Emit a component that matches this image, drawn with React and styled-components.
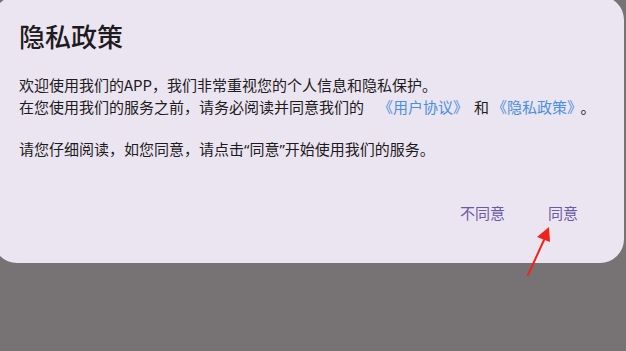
import React from "react";
import styled, { createGlobalStyle } from "styled-components";

const Global = createGlobalStyle`
  html, body { margin: 0; padding: 0; }
  body {
    background: #777274;
    font-family: "Noto Sans CJK SC", "Noto Sans", sans-serif;
    overflow: hidden;
  }
`;

const Screen = styled.div`
  position: relative;
  width: 626px;
  height: 351px;
  overflow: hidden;
  background: #777274;
`;

const Dialog = styled.div`
  box-sizing: border-box;
  margin: -4px 0 0 -7px;
  width: 631px;
  height: 267px;
  border-radius: 24px;
  background: #ebe5f1;
  padding: 24px 34px 0 26px;
  display: flex;
  flex-direction: column;
`;

const Title = styled.h1`
  margin: 0;
  font-size: 26px;
  line-height: 32px;
  font-weight: 500;
  color: #1d1b20;
`;

const Paragraph = styled.p`
  margin: ${(p) => p.$gap}px 0 0;
  font-size: 15px;
  line-height: 22px;
  color: #1d1b20;
  white-space: nowrap;
`;

const Link = styled.span`
  color: #4a8fe0;
  margin-left: ${(p) => p.$ml || 0}px;
  margin-right: ${(p) => p.$mr || 0}px;
`;

const Quote = styled.span`
  font-family: "Noto Sans", sans-serif;
`;

const Actions = styled.div`
  margin-top: 32px;
  display: flex;
  justify-content: flex-end;
  gap: 19px;
`;

const TextButton = styled.button`
  height: 40px;
  padding: 0 12px;
  border: none;
  background: transparent;
  font-family: inherit;
  font-size: 15px;
  color: #6b5aa6;
  cursor: pointer;
`;

const Arrow = styled.svg`
  position: absolute;
  left: 520px;
  top: 220px;
  width: 40px;
  height: 60px;
`;

export default function App() {
  return (
    <Screen>
      <Global />
      <Dialog>
        <Title>隐私政策</Title>
        <Paragraph $gap={22}>
          欢迎使用我们的APP，我们非常重视您的个人信息和隐私保护。
          <br />
          在您使用我们的服务之前，请务必阅读并同意我们的<Link $ml={14} $mr={6}>《用户协议》</Link>和<Link $ml={3} $mr={6}>《隐私政策》</Link>。
        </Paragraph>
        <Paragraph $gap={20}>
          请您仔细阅读，如您同意，请点击<Quote>“</Quote>同意<Quote>”</Quote>开始使用我们的服务。
        </Paragraph>
        <Actions>
          <TextButton>不同意</TextButton>
          <TextButton>同意</TextButton>
        </Actions>
      </Dialog>
      <Arrow viewBox="0 0 40 60">
        <path d="M8 55 L24 20" stroke="#f2231b" strokeWidth="2" strokeLinecap="round" fill="none" />
        <polygon points="29,7 30,22 17,17" fill="#f2231b" />
      </Arrow>
    </Screen>
  );
}
